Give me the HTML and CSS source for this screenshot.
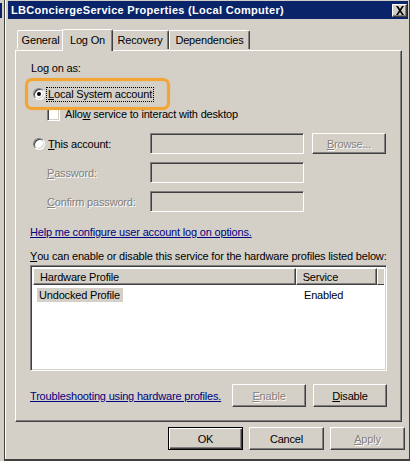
FILE: index.html
```html
<!DOCTYPE html>
<html>
<head>
<meta charset="utf-8">
<link rel="stylesheet" href="styles.css">
</head>
<body>
<div class="screen">
  <div class="backdrop"><div class="backdrop-cap"></div></div>
  <div class="frame">
    <div class="window">
      <div class="titlebar">
        <span class="title">LBConciergeService Properties (Local Computer)</span>
        <span class="close">
          <svg width="10" height="9" viewBox="0 0 10 9"><path d="M1 0h2l2 3 2-3h2L6 4.5 9 9H7L5 6 3 9H1l3-4.5z" fill="#000"/></svg>
        </span>
      </div>
      <div class="content">
        <div class="tabs">
          <div class="tab tab-general">General</div>
          <div class="tab tab-logon active">Log On</div>
          <div class="tab tab-recovery">Recovery</div>
          <div class="tab tab-deps">Dependencies</div>
        </div>
        <div class="panel">
          <div class="row row-label">Log on as:</div>
          <div class="row row-radio1">
            <span class="radio checked"></span>
            <span class="focus"><u>L</u>ocal System account</span>
          </div>
          <div class="row row-check">
            <span class="checkbox"></span>
            <span>Allo<u>w</u> service to interact with desktop</span>
          </div>
          <div class="row row-account">
            <span class="radio"></span>
            <span class="acct-label"><u>T</u>his account:</span>
            <span class="field"></span>
            <span class="btn disabled browse"><span class="dtext"><u>B</u>rowse...</span></span>
          </div>
          <div class="row row-pw">
            <span class="pw-label dtext"><u>P</u>assword:</span>
            <span class="field"></span>
          </div>
          <div class="row row-pw">
            <span class="pw-label dtext"><u>C</u>onfirm password:</span>
            <span class="field"></span>
          </div>
          <div class="row row-link"><span class="link">Help me configure user account log on options.</span></div>
          <div class="row row-text"><u>Y</u>ou can enable or disable this service for the hardware profiles listed below:</div>
          <div class="listbox">
            <div class="list-header">
              <div class="hcell hcol1">Hardware Profile</div>
              <div class="hcell hcol2">Service</div>
              <div class="hcell hcol3"></div>
            </div>
            <div class="list-row">
              <div class="lcell lcol1"><span class="sel">Undocked Profile</span></div>
              <div class="lcell lcol2">Enabled</div>
            </div>
          </div>
          <div class="row row-trouble">
            <span class="link">Troubleshooting using hardware profiles.</span>
            <span class="btn disabled small"><span class="dtext"><u>E</u>nable</span></span>
            <span class="btn small"><u>D</u>isable</span>
          </div>
          <div class="highlight"></div>
        </div>
        <div class="footer">
          <span class="btn default">OK</span>
          <span class="btn">Cancel</span>
          <span class="btn disabled"><span class="dtext"><u>A</u>pply</span></span>
        </div>
      </div>
    </div>
  </div>
</div>
</body>
</html>
```

FILE: styles.css
```css
* { box-sizing: border-box; }
html, body { margin: 0; padding: 0; }
body {
  font-family: "Liberation Sans", Arial, sans-serif;
  font-size: 11px;
  letter-spacing: -0.18px;
  color: #000;
  background: #d4d0c8;
}
u { text-decoration: underline; text-underline-offset: 1px; }

.screen {
  width: 410px;
  height: 461px;
  display: flex;
  background: #d4d0c8;
  overflow: hidden;
}
.backdrop {
  width: 4px;
  flex: none;
  background: #d4d0c8;
}
.backdrop-cap {
  width: 2px;
  height: 15px;
  margin-top: 3px;
  background: #0a246a;
}
.frame {
  flex: 1;
  border-left: 1px solid #404040;
  border-bottom: 2px solid #404040;
  border-right: 1px solid #404040;
  display: flex;
}
.window {
  flex: 1;
  border-left: 1px solid #fff;
  padding: 1px 1px 0 2px;
  display: flex;
  flex-direction: column;
}
.titlebar {
  height: 18px;
  background: #0a246a;
  color: #fff;
  font-weight: bold;
  display: flex;
  align-items: center;
  padding-left: 3px;
  padding-right: 1px;
}
.title { flex: 1; white-space: nowrap; letter-spacing: 0.3px; }
.close {
  width: 15px;
  height: 13px;
  background: #d4d0c8;
  border-top: 1px solid #fff;
  border-left: 1px solid #fff;
  border-right: 1px solid #404040;
  border-bottom: 1px solid #404040;
  box-shadow: inset -1px -1px 0 #808080;
  display: flex;
  align-items: center;
  justify-content: center;
}

.content {
  flex: 1;
  display: flex;
  flex-direction: column;
  padding-left: 7px;
}

/* tabs */
.tabs {
  margin-top: 10px;
  height: 21px;
  display: flex;
  align-items: flex-end;
  padding-left: 2px;
  position: relative;
  z-index: 2;
}
.tab {
  height: 19px;
  border-top: 1px solid #fff;
  border-left: 1px solid #fff;
  border-right: 1px solid #404040;
  border-radius: 2px 2px 0 0;
  box-shadow: inset -1px 0 0 #808080;
  display: flex;
  align-items: center;
  justify-content: center;
  background: #d4d0c8;
  margin-bottom: 1px;
}
.tab-general { width: 47px; }
.tab-logon { width: 51px; }
.tab-recovery { width: 58px; }
.tab-deps { width: 81px; }
.tab.active {
  height: 22px;
  margin-bottom: -1px;
  margin-left: -2px;
  margin-right: -2px;
  position: relative;
  z-index: 3;
  padding-bottom: 2px;
}

.panel {
  width: 387px;
  height: 372px;
  border-top: 1px solid #fff;
  border-left: 1px solid #fff;
  border-right: 1px solid #404040;
  border-bottom: 1px solid #404040;
  box-shadow: inset -1px -1px 0 #808080;
  padding: 10px 14px 0 14px;
  display: flex;
  flex-direction: column;
  position: relative;
}
.row {
  display: flex;
  align-items: center;
  white-space: nowrap;
}
.row-label { height: 14px; padding-left: 1px; }
.row-radio1 { height: 14px; margin-top: 12px; }
.row-check { height: 14px; margin-top: 6px; }
.row-account { height: 21px; margin-top: 12px; }
.row-pw { height: 21px; margin-top: 8px; }
.row-link { height: 14px; margin-top: 13px; }
.row-text { height: 14px; margin-top: 10px; }
.row-trouble { height: 23px; margin-top: 13px; }

.radio {
  width: 12px;
  height: 12px;
  margin-left: 3px;
  margin-right: 2px;
  border-radius: 50%;
  background: #fff;
  border: 1px solid;
  border-color: #808080 #fff #fff #808080;
  box-shadow: inset 1px 1px 0 #404040, inset -1px -1px 0 #d4d0c8;
  display: flex;
  align-items: center;
  justify-content: center;
  flex: none;
}
.radio.checked::after {
  content: "";
  width: 4px;
  height: 4px;
  border-radius: 50%;
  background: #000;
}
.focus {
  outline: 1px dotted #000;
  outline-offset: 0;
  padding: 0 1px;
  line-height: 13px;
}
.checkbox {
  width: 13px;
  height: 13px;
  margin-left: 17px;
  margin-right: 5px;
  background: #fff;
  border: 1px solid;
  border-color: #808080 #fff #fff #808080;
  box-shadow: inset 1px 1px 0 #404040, inset -1px -1px 0 #d4d0c8;
  flex: none;
}
.acct-label { width: 103px; padding-left: 1px; }
.pw-label { width: 103px; margin-left: 17px; }
.field {
  width: 154px;
  height: 21px;
  border: 1px solid;
  border-color: #808080 #fff #fff #808080;
  box-shadow: inset 1px 1px 0 #404040, inset -1px -1px 0 #d4d0c8;
  background: #d4d0c8;
  flex: none;
}
.dtext {
  color: #808080;
  text-shadow: 1px 1px 0 #fff;
}

.btn {
  width: 75px;
  height: 23px;
  display: flex;
  align-items: center;
  justify-content: center;
  border: 1px solid;
  border-color: #fff #404040 #404040 #fff;
  box-shadow: inset -1px -1px 0 #808080;
  background: #d4d0c8;
  flex: none;
}
.btn.browse { width: 74px; height: 21px; margin-left: 8px; }
.btn.small { width: 74px; }
.btn.default {
  border: 1px solid #000;
  box-shadow: inset 1px 1px 0 #fff, inset -1px -1px 0 #404040, inset -2px -2px 0 #808080;
}

.link {
  color: #000080;
  text-decoration: underline;
}
.row-trouble .link { flex: 1; }
.row-trouble .btn + .btn { margin-left: 7px; }

.listbox {
  margin-top: 2px;
  height: 106px;
  border: 1px solid;
  border-color: #808080 #fff #fff #808080;
  box-shadow: inset 1px 1px 0 #404040, inset -1px -1px 0 #d4d0c8;
  background: #fff;
  padding: 2px;
}
.list-header {
  display: flex;
  height: 17px;
}
.hcell {
  height: 17px;
  background: #d4d0c8;
  border: 1px solid;
  border-color: #fff #404040 #404040 #fff;
  box-shadow: inset -1px -1px 0 #808080;
  display: flex;
  align-items: center;
  padding-left: 6px;
}
.hcol1 { width: 265px; }
.hcol2 { width: 82px; }
.hcol3 { width: 4px; border-right: none; box-shadow: none; }
.list-row {
  display: flex;
  height: 16px;
  margin-top: 2px;
  align-items: center;
}
.lcell { display: flex; align-items: center; height: 16px; }
.lcol1 { width: 265px; padding-left: 4px; }
.lcol2 { padding-left: 6px; }
.sel {
  background: #d4d0c8;
  padding: 1px 3px 1px 2px;
}

.highlight {
  position: absolute;
  left: 9px;
  top: 27px;
  width: 145px;
  height: 32px;
  border: 3px solid #f2a535;
  border-radius: 7px;
  box-shadow: 0 0 1px #f2a535, inset 0 0 1px #f2a535;
  pointer-events: none;
}

.footer {
  display: flex;
  justify-content: flex-end;
  gap: 6px;
  margin-top: 5px;
  padding-right: 3px;
}
```
